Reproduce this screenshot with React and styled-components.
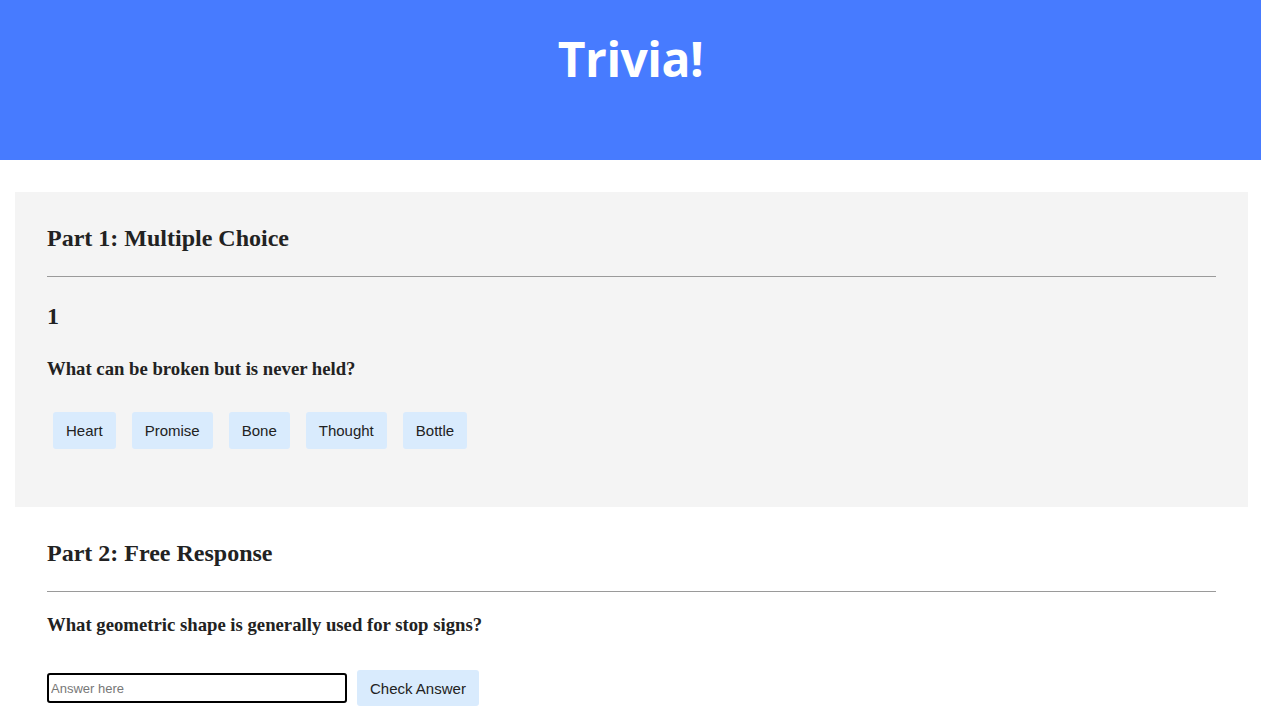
import React from "react";
import styled, { createGlobalStyle } from "styled-components";

const GlobalStyle = createGlobalStyle`
    body {
        margin: 0;
        background: #ffffff;
        font-family: "Liberation Serif", "Times New Roman", serif;
        color: #222222;
    }
`;

// ===========> HEADER
const Header = styled.header`
    height: 160px;
    background-color: #477bff;
    display: flex;
    justify-content: center;
    box-sizing: border-box;
    padding-top: 26px;
    h1 {
        margin: 0;
        font-family: "Open Sans", "Liberation Sans", sans-serif;
        font-weight: 700;
        font-size: 48px;
        line-height: 66px;
        color: #ffffff;
        letter-spacing: -0.5px;
    }
`;

// ===========> SECTIONS
const Section = styled.section`
    margin: 0 13px 0 15px;
    padding: 32px 32px ${(props) => props.$bottom || "0px"};
    background-color: ${(props) => (props.$shaded ? "#f4f4f4" : "transparent")};
    &:first-of-type {
        margin-top: 32px;
    }
    h2 {
        font-size: 24px;
        font-weight: 700;
        margin: 0;
        line-height: 28px;
    }
    hr {
        border: none;
        border-top: 1px solid #9a9a9a;
        margin: 24px 0 0;
    }
`;

const Number = styled.h2`
    margin-top: 25px !important;
`;

const Question = styled.h3`
    font-size: 18.72px;
    font-weight: 700;
    line-height: 22px;
    margin: ${(props) => props.$top || "28px"} 0 0;
`;

const Options = styled.div`
    margin-top: 32px;
    font-size: 0;
`;

const Option = styled.button`
    margin: 0 10px 0 6px;
    height: 37px;
    padding: 0 13px;
    border: none;
    border-radius: 3px;
    background-color: #d9ebfd;
    font-family: "Liberation Sans", Arial, sans-serif;
    font-size: 15px;
    color: #222222;
    cursor: pointer;
`;

const AnswerRow = styled.div`
    display: flex;
    align-items: center;
    gap: 10px;
    margin-top: 34px;
    padding-bottom: 12px;
`;

const AnswerInput = styled.input`
    width: 300px;
    height: 30px;
    box-sizing: border-box;
    border: 2px solid #000000;
    border-radius: 3px;
    padding: 0 2px;
    font-family: "Liberation Sans", Arial, sans-serif;
    font-size: 13px;
    &::placeholder {
        color: #777777;
    }
`;

const CheckButton = styled(Option)`
    margin: 0;
    height: 36px;
`;

const choices = ["Heart", "Promise", "Bone", "Thought", "Bottle"];

export default function App() {
    return (
        <>
            <GlobalStyle />
            <Header>
                <h1>Trivia!</h1>
            </Header>

            {/* part 1 */}
            <Section $shaded $bottom="58px">
                <h2>Part 1: Multiple Choice</h2>
                <hr />
                <Number>1</Number>
                <Question>What can be broken but is never held?</Question>
                <Options>
                    {choices.map((c) => (
                        <Option key={c}>{c}</Option>
                    ))}
                </Options>
            </Section>

            {/* part 2 */}
            <Section>
                <h2>Part 2: Free Response</h2>
                <hr />
                <Question $top="22px">What geometric shape is generally used for stop signs?</Question>
                <AnswerRow>
                    <AnswerInput placeholder="Answer here" />
                    <CheckButton>Check Answer</CheckButton>
                </AnswerRow>
            </Section>
        </>
    );
}
